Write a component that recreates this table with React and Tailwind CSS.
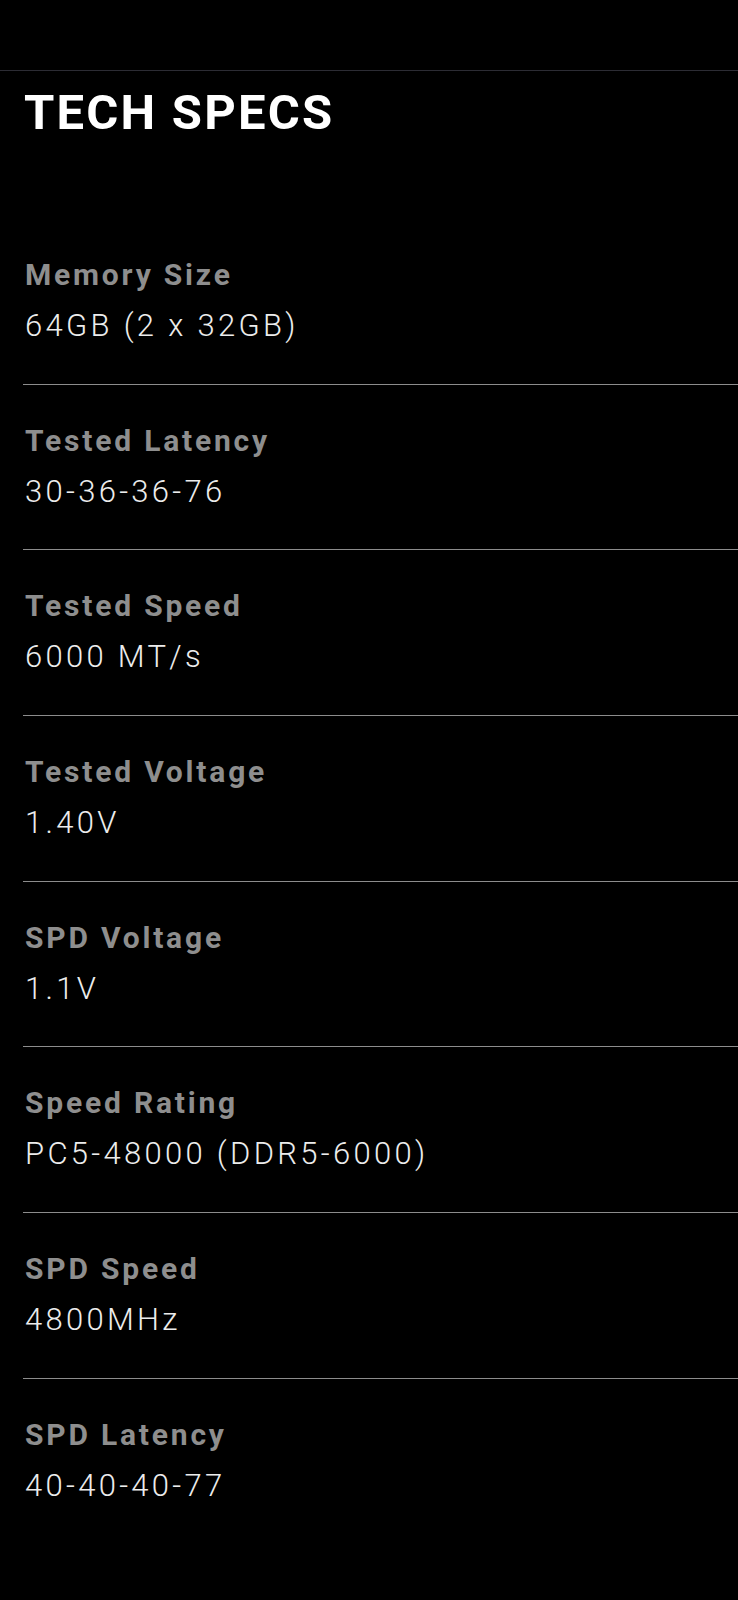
const specs = [
  { label: "Memory Size", value: "64GB (2 x 32GB)" },
  { label: "Tested Latency", value: "30-36-36-76" },
  { label: "Tested Speed", value: "6000 MT/s" },
  { label: "Tested Voltage", value: "1.40V" },
  { label: "SPD Voltage", value: "1.1V" },
  { label: "Speed Rating", value: "PC5-48000 (DDR5-6000)" },
  { label: "SPD Speed", value: "4800MHz" },
  { label: "SPD Latency", value: "40-40-40-77" },
];

export default function App() {
  return (
    <div className="min-h-[1600px] bg-black font-['Roboto',sans-serif]">
      <div className="h-[70px]" />
      <div className="border-t border-[#2c2c34]">
        <h2 className="pl-6 pt-[14px] text-[49px] leading-[56px] font-bold tracking-[2.2px] text-white">
          TECH SPECS
        </h2>
        <div className="ml-[23px] mt-[116px]">
          {specs.map((s, i) => (
            <div
              key={s.label}
              className={
                i === 0
                  ? "pl-[2px] pb-[39.7px]"
                  : "border-t border-[#8c8c8c] pl-[2px] pt-[38px] pb-[39.7px]"
              }
            >
              <p className="text-[30px] leading-[36px] font-bold tracking-[2.8px] text-[#8e8e8e]">
                {s.label}
              </p>
              <p className="mt-[15px] text-[31px] leading-[36px] font-light tracking-[3.3px] text-[#ececec]">
                {s.value}
              </p>
            </div>
          ))}
        </div>
      </div>
    </div>
  );
}
